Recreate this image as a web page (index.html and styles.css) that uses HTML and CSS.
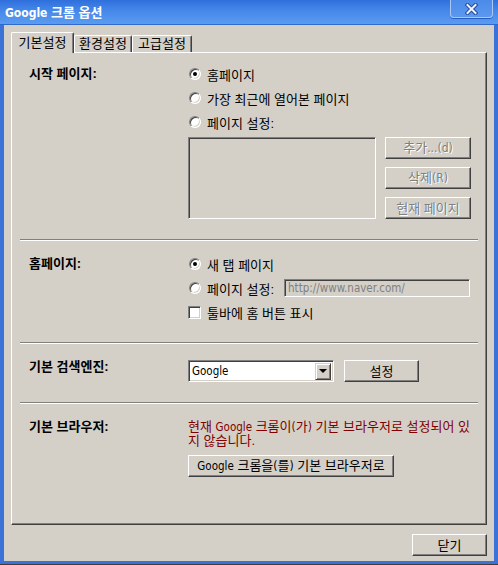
FILE: index.html
```html
<!DOCTYPE html>
<html lang="ko">
<head>
<meta charset="utf-8">
<title>Google 크롬 옵션</title>
<link rel="stylesheet" href="styles.css">
</head>
<body>
<div class="window">
  <div class="titlebar">
    <span class="title"><span class="lat-title">Google</span> 크롬 옵션</span>
    <button class="close-x" aria-label="닫기">
      <svg width="13" height="12" viewBox="0 0 13 12">
        <path d="M2.5 2 L10.5 10 M10.5 2 L2.5 10" stroke="#23489a" stroke-width="4" stroke-linecap="square" fill="none"/>
        <path d="M2.5 2 L10.5 10 M10.5 2 L2.5 10" stroke="#eef4ff" stroke-width="2" stroke-linecap="square" fill="none"/>
      </svg>
    </button>
  </div>
  <div class="client">
    <div class="tabs">
      <div class="tab active">기본설정</div>
      <div class="tab t2">환경설정</div>
      <div class="tab t3">고급설정</div>
    </div>
    <div class="panel">
      <section class="sec sec1">
        <div class="label">시작 페이지:</div>
        <div class="controls">
          <div class="opt"><span class="radio on"></span><span>홈페이지</span></div>
          <div class="opt"><span class="radio"></span><span>가장 최근에 열어본 페이지</span></div>
          <div class="opt"><span class="radio"></span><span>페이지 설정:</span></div>
          <div class="pages">
            <div class="listbox"></div>
            <div class="side">
              <button class="btn dis">추가<span class="lat2">...(d)</span></button>
              <button class="btn dis">삭제<span class="lat2">(R)</span></button>
              <button class="btn dis">현재 페이지</button>
            </div>
          </div>
        </div>
      </section>
      <div class="sep"></div>
      <section class="sec sec2">
        <div class="label">홈페이지:</div>
        <div class="controls">
          <div class="opt"><span class="radio on"></span><span>새 탭 페이지</span></div>
          <div class="opt"><span class="radio"></span><span>페이지 설정:</span><span class="url">http://www.naver.com/</span></div>
          <div class="opt"><span class="check"></span><span>툴바에 홈 버튼 표시</span></div>
        </div>
      </section>
      <div class="sep"></div>
      <section class="sec sec3">
        <div class="label">기본 검색엔진:</div>
        <div class="controls row">
          <div class="combo"><span class="combo-text lat">Google</span><span class="arrow"><span class="tri"></span></span></div>
          <button class="btn set">설정</button>
        </div>
      </section>
      <div class="sep"></div>
      <section class="sec sec4">
        <div class="label">기본 브라우저:</div>
        <div class="controls">
          <div class="warn">현재 <span class="lat">Google</span> 크롬이<span class="lat2">(</span>가<span class="lat2">)</span> 기본 브라우저로 설정되어 있<br>지 않습니다.</div>
          <button class="btn make"><span class="lat">Google</span> 크롬을<span class="lat2">(</span>를<span class="lat2">)</span> 기본 브라우저로</button>
        </div>
      </section>
    </div>
    <div class="footer">
      <button class="btn closebtn">닫기</button>
    </div>
  </div>
</div>
</body>
</html>
```

FILE: styles.css
```css
html, body {
  margin: 0;
  padding: 0;
  background: #ffffff;
}

.window {
  width: 498px;
  height: 565px;
  box-sizing: border-box;
  display: flex;
  flex-direction: column;
  background: #3a72d8;
  border-bottom: 1px solid #3c3c3c;
  font-family: "Liberation Sans", "Noto Sans CJK KR", sans-serif;
  font-size: 13px;
  color: #000;
}

.lat {
  font-family: "DejaVu Sans Condensed", "DejaVu Sans", sans-serif;
  font-size: 11.5px;
}

.lat2 {
  font-family: "DejaVu Sans Condensed", "DejaVu Sans", sans-serif;
  font-size: 12px;
}

.titlebar {
  height: 25px;
  flex: none;
  box-sizing: border-box;
  display: flex;
  justify-content: space-between;
  align-items: flex-start;
  padding-left: 5px;
  background: linear-gradient(to bottom, #2f6fdc 0%, #4386e8 40%, #5a9cf0 100%);
  border-bottom: 1px solid #3068cc;
}

.title {
  color: #ffffff;
  font-weight: bold;
  font-size: 13px;
  line-height: 25px;
}

.lat-title {
  font-family: "DejaVu Sans Condensed", "DejaVu Sans", sans-serif;
  font-size: 12px;
  font-weight: bold;
}

.close-x {
  width: 43px;
  height: 18px;
  margin-right: 5px;
  padding: 0;
  box-sizing: border-box;
  border: 1px solid #a9c8f8;
  border-top: none;
  border-radius: 0 0 4px 4px;
  background: linear-gradient(to bottom, #4c8aea, #5a98f0);
  box-shadow: 0 1px 0 #2a5cc0;
  display: flex;
  align-items: center;
  justify-content: center;
}

.client {
  flex: 1;
  margin: 0 4px 3px 4px;
  padding: 0 7px;
  background: #d4d0c8;
  display: flex;
  flex-direction: column;
}

.tabs {
  display: flex;
  align-items: flex-end;
  height: 20px;
  margin-top: 7px;
}

.tab {
  width: 58px;
  height: 17px;
  box-sizing: border-box;
  padding: 0;
  text-align: center;
  line-height: 16px;
  background: #d4d0c8;
  border-top: 1px solid #ffffff;
  border-left: 1px solid #ffffff;
  border-right: 1px solid #404040;
  border-radius: 2px 2px 0 0;
  box-shadow: inset -1px 0 #808080;
  white-space: nowrap;
}

.tab.t3 {
  width: 60px;
}

.tab.active {
  width: 63px;
  height: 21px;
  margin-bottom: -1px;
  line-height: 19px;
  position: relative;
  z-index: 1;
}

.panel {
  height: 473px;
  box-sizing: border-box;
  border: 1px solid;
  border-color: #ffffff #404040 #404040 #ffffff;
  box-shadow: inset -1px -1px #808080;
  padding: 0 8px;
}

.sep {
  height: 0;
  border-top: 1px solid #808080;
  border-bottom: 1px solid #ffffff;
}

.sec {
  display: grid;
  grid-template-columns: 159px 1fr;
  align-items: start;
  padding-left: 9px;
}

.label {
  font-weight: bold;
  line-height: 24px;
  white-space: nowrap;
}

.sec1 {
  padding-top: 9px;
  padding-bottom: 20px;
}

.sec2 {
  padding-top: 11px;
  padding-bottom: 18px;
}

.sec3 {
  padding-top: 16px;
  padding-bottom: 20px;
}

.sec3 .label {
  line-height: 14px;
}

.sec4 {
  padding-top: 16px;
}

.sec4 .label {
  line-height: 14px;
}

.opt {
  height: 24px;
  display: flex;
  align-items: center;
  gap: 6px;
  white-space: nowrap;
}

.radio {
  flex: none;
  width: 12px;
  height: 12px;
  margin-left: 1px;
  box-sizing: border-box;
  border-radius: 50%;
  background: #ffffff;
  border: 1px solid;
  border-color: #808080 #ffffff #ffffff #808080;
  box-shadow: inset 1px 1px #404040, inset -1px -1px #d4d0c8;
  position: relative;
}

.radio.on::after {
  content: "";
  position: absolute;
  left: 3px;
  top: 3px;
  width: 4px;
  height: 4px;
  border-radius: 50%;
  background: #000;
}

.check {
  flex: none;
  width: 13px;
  height: 13px;
  box-sizing: border-box;
  background: #ffffff;
  border: 1px solid;
  border-color: #808080 #ffffff #ffffff #808080;
  box-shadow: inset 1px 1px #404040, inset -1px -1px #d4d0c8;
}

.pages {
  display: flex;
  gap: 9px;
  margin-top: 3px;
}

.listbox {
  width: 188px;
  height: 82px;
  box-sizing: border-box;
  background: #d4d0c8;
  border: 1px solid;
  border-color: #808080 #ffffff #ffffff #808080;
  box-shadow: inset 1px 1px #404040, inset -1px -1px #d4d0c8;
}

.side {
  display: flex;
  flex-direction: column;
  gap: 8px;
}

.btn {
  height: 22px;
  box-sizing: border-box;
  padding: 0;
  margin: 0;
  background: #d4d0c8;
  border: 1px solid;
  border-color: #ffffff #404040 #404040 #ffffff;
  box-shadow: inset -1px -1px #808080;
  font: inherit;
  font-size: 13px;
  line-height: 19px;
  color: #000;
  white-space: nowrap;
}

.btn.dis {
  width: 86px;
  color: #808080;
  text-shadow: 1px 1px #ffffff;
}

.url {
  width: 186px;
  height: 18px;
  margin-left: 4px;
  box-sizing: border-box;
  padding-left: 3px;
  background: #d4d0c8;
  border: 1px solid;
  border-color: #808080 #ffffff #ffffff #808080;
  box-shadow: inset 1px 1px #404040;
  color: #808080;
  font-family: "DejaVu Sans Condensed", "DejaVu Sans", sans-serif;
  font-size: 11.5px;
  line-height: 16px;
}

.row {
  display: flex;
  align-items: flex-start;
  gap: 10px;
}

.combo {
  width: 146px;
  height: 22px;
  box-sizing: border-box;
  display: flex;
  justify-content: space-between;
  align-items: center;
  background: #ffffff;
  border: 1px solid;
  border-color: #808080 #ffffff #ffffff #808080;
  box-shadow: inset 1px 1px #404040, inset -1px -1px #d4d0c8;
  padding: 2px 2px 2px 3px;
}

.combo-text {
  font-size: 11.5px;
  line-height: 16px;
}

.arrow {
  width: 16px;
  height: 17px;
  box-sizing: border-box;
  background: #d4d0c8;
  border: 1px solid;
  border-color: #d4d0c8 #404040 #404040 #d4d0c8;
  box-shadow: inset 1px 1px #ffffff, inset -1px -1px #808080;
  display: flex;
  align-items: center;
  justify-content: center;
}

.tri {
  width: 0;
  height: 0;
  border-left: 4px solid transparent;
  border-right: 4px solid transparent;
  border-top: 4px solid #000;
}

.btn.set {
  width: 75px;
}

.warn {
  color: #800000;
  line-height: 13px;
  white-space: nowrap;
}

.btn.make {
  width: 206px;
  margin-top: 8px;
}

.footer {
  display: flex;
  justify-content: flex-end;
  padding-top: 9px;
}

.btn.closebtn {
  width: 75px;
}
```
